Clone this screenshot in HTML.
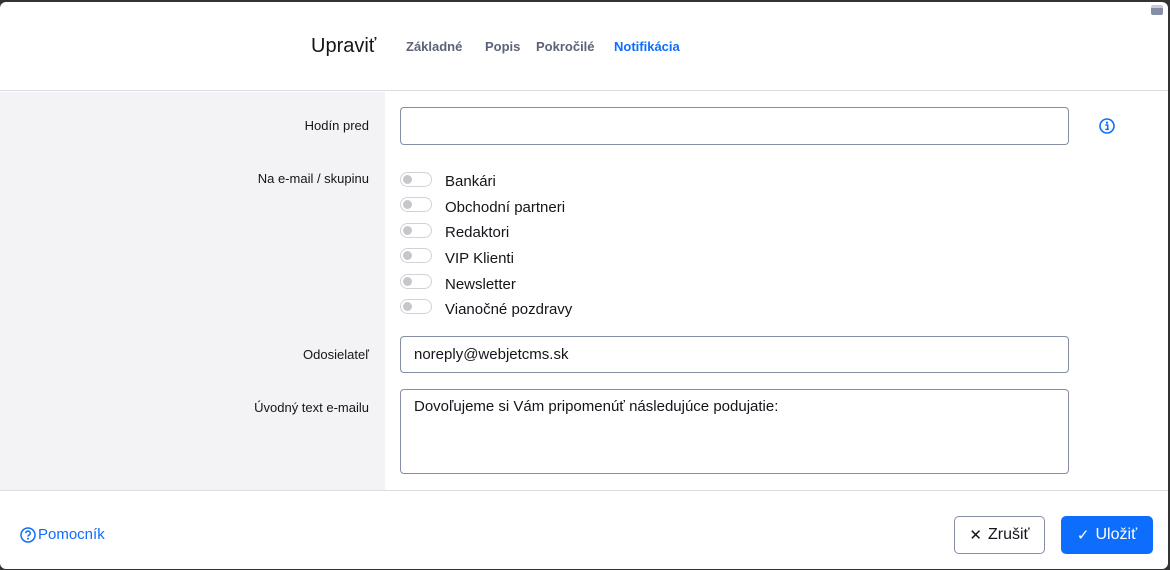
<!DOCTYPE html>
<html><head><meta charset="utf-8"><style>
*{box-sizing:border-box;margin:0;padding:0}
body{width:1170px;height:570px;overflow:hidden;background:#333;font-family:"Liberation Sans",sans-serif;position:relative}
.modal{position:absolute;left:0;top:2px;width:1168px;height:567px;background:#fff;border-radius:6px;overflow:hidden}
.hdr{position:absolute;left:0;top:0;width:100%;height:89px;border-bottom:1px solid #dcdde2}
.title{position:absolute;left:311px;top:33px;font-size:20px;color:#13151a}
.tab{position:absolute;top:37px;font-size:13px;font-weight:bold;color:#5c6277}
.body{position:absolute;left:0;top:90px;width:100%;height:398px;background:#fff}
.left{position:absolute;left:0;top:0;width:385px;height:100%;background:#f3f3f5}
.lbl{position:absolute;right:799px;font-size:13px;color:#13151a;text-align:right;white-space:nowrap}
.inp{position:absolute;left:400px;width:669px;border:1px solid #868ea5;border-radius:4px;font-size:15px;color:#13151a;padding-left:13px}
.sw{position:absolute;left:400px;width:32px;height:15px;border:1px solid #d0d2d8;border-radius:8px;background:#fff}
.sw:after{content:"";position:absolute;left:2px;top:2px;width:9px;height:9px;border-radius:50%;background:#c6c7cb}
.swl{position:absolute;left:445px;font-size:15px;color:#13151a}
.ftr{position:absolute;left:0;top:488px;width:100%;height:80px;border-top:1px solid #dcdde2}
.btn{position:absolute;top:25px;height:38px;border-radius:5px;font-size:16px;display:flex;align-items:center;justify-content:center;gap:6px}
</style></head><body>
<div class="modal">
<div class="hdr">
<div class="title">Upraviť</div>
<div class="tab" style="left:406px">Základné</div>
<div class="tab" style="left:485px">Popis</div>
<div class="tab" style="left:536px">Pokročilé</div>
<div class="tab" style="left:614px;color:#0d6efd">Notifikácia</div>
<div style="position:absolute;left:1151px;top:3px;width:12px;height:10px;background:#868ea5;border-radius:2px;border-top:3px solid #c9ccd6"></div>
</div>
<div class="body">
<div class="left"></div>
<div class="lbl" style="top:26px">Hodín pred</div>
<div class="inp" style="top:15px;height:38px"></div>
<svg style="position:absolute;left:1099px;top:26px" width="16" height="16" viewBox="0 0 16 16"><circle cx="8" cy="8" r="7" fill="none" stroke="#0d6efd" stroke-width="1.6"/><circle cx="8" cy="4.6" r="1.1" fill="#0d6efd"/><path d="M6.3 7h2.4v4.4h1.2M6.3 11.4h3.6" stroke="#0d6efd" stroke-width="1.5" fill="none"/></svg>
<div class="lbl" style="top:79px">Na e-mail / skupinu</div>
<div class="sw" style="top:80px"></div><div class="swl" style="top:81px">Bankári</div>
<div class="sw" style="top:105px"></div><div class="swl" style="top:107px">Obchodní partneri</div>
<div class="sw" style="top:131px"></div><div class="swl" style="top:132px">Redaktori</div>
<div class="sw" style="top:156px"></div><div class="swl" style="top:158px">VIP Klienti</div>
<div class="sw" style="top:182px"></div><div class="swl" style="top:184px">Newsletter</div>
<div class="sw" style="top:207px"></div><div class="swl" style="top:209px">Vianočné pozdravy</div>
<div class="lbl" style="top:255px">Odosielateľ</div>
<div class="inp" style="top:244px;height:37px;line-height:35px">noreply@webjetcms.sk</div>
<div class="lbl" style="top:308px">Úvodný text e-mailu</div>
<div class="inp" style="top:297px;height:85px;padding-top:8px">Dovoľujeme si Vám pripomenúť následujúce podujatie:</div>
</div>
<div class="ftr">
<div style="position:absolute;left:20px;top:35px;font-size:15px;color:#0d6efd;display:flex;align-items:center;gap:2px"><svg width="16" height="16" viewBox="0 0 16 16"><circle cx="8" cy="8" r="7" fill="none" stroke="#0d6efd" stroke-width="1.5"/><path d="M5.8 6.2a2.2 2.2 0 1 1 3 2c-.6.3-.8.7-.8 1.4" stroke="#0d6efd" stroke-width="1.5" fill="none"/><circle cx="8" cy="11.8" r="1" fill="#0d6efd"/></svg>Pomocník</div>
<div class="btn" style="left:954px;width:91px;border:1px solid #868ea5;color:#13151a"><span style="font-size:15px">✕</span>Zrušiť</div>
<div class="btn" style="left:1061px;width:92px;background:#0d6efd;color:#fff"><span style="font-size:15px">✓</span>Uložiť</div>
</div>
</div>
</body></html>
